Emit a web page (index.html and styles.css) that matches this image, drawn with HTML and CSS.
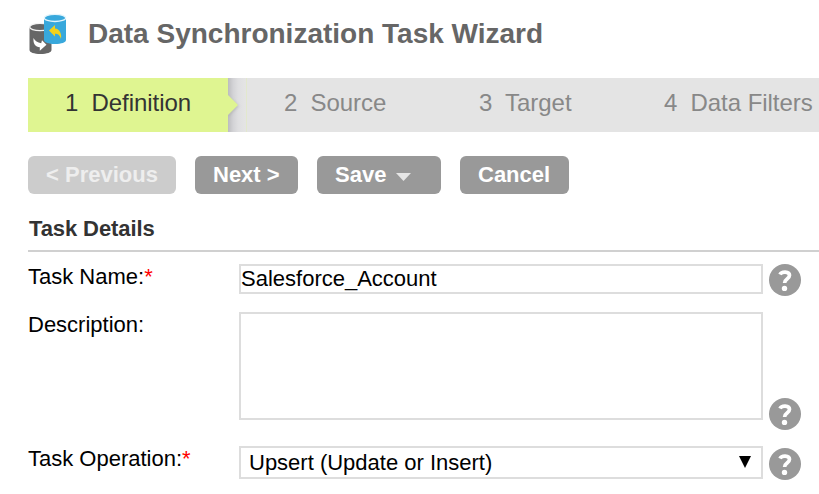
FILE: index.html
```html
<!DOCTYPE html>
<html lang="en">
<head>
<meta charset="utf-8">
<title>Data Synchronization Task Wizard</title>
<link rel="stylesheet" href="styles.css">
</head>
<body>
<header class="header">
  <svg class="logo" width="40" height="42" viewBox="0 0 40 42">
    <path d="M1.500 14v23c0 2.400 4.500 4 11 4s11-1.600 11-4V14z" fill="#666"/>
    <ellipse cx="12" cy="14" rx="10.300" ry="3.600" fill="#666" stroke="#f4f4f4" stroke-width="1.300"/>
    <path d="M5.500 25c-.5 6 2 9 6.300 9.300v3.500l6.700-6-4.500-4.500-.8 3C9.500 29.500 7 28 5.500 25z" fill="#fff"/>
    <path d="M16 5v22c0 2.400 4.500 4 11 4s11-1.600 11-4V5z" fill="#38a8dc"/>
    <ellipse cx="27" cy="4.900" rx="10.700" ry="3.600" fill="#38a8dc" stroke="#e4f5fc" stroke-width="1.300"/>
    <path d="M21 17.500l6-5.500v3.500c4.500.5 7 5 6 10.500-1.200-4-3.200-5.200-6-5.200v2.700z" fill="#f2d21c"/>
  </svg>
  <h1 class="title">Data Synchronization Task Wizard</h1>
</header>
<nav class="steps">
  <div class="step active">1&nbsp; Definition
    <svg class="pointer" width="22" height="54" viewBox="0 0 22 54">
      <defs>
        <linearGradient id="edge"><stop offset="0" stop-color="#bcbcbf"/><stop offset=".3" stop-color="#d3d3d6"/><stop offset=".6" stop-color="#dfdfe1"/><stop offset="1" stop-color="#e4e4e4"/></linearGradient>
        <filter id="soft" x="-50%" y="-50%" width="200%" height="200%"><feGaussianBlur stdDeviation="1.500"/></filter>
      </defs>
      <path d="M0 0h17v54H0z" fill="url(#edge)"/>
      <path d="M0 18l11 10L0 39z" fill="#aaa" opacity=".6" filter="url(#soft)"/>
      <path d="M0 17l10 10L0 37z" fill="#dff591"/>
      <path d="M18.500 0v54" stroke="#e2e8cd"/>
    </svg>
  </div>
  <div class="step source">2&nbsp; Source</div>
  <div class="step target">3&nbsp; Target</div>
  <div class="step filters">4&nbsp; Data Filters</div>
</nav>
<main class="content">
  <div class="actions">
    <button class="btn previous" disabled>&lt; Previous</button>
    <button class="btn next">Next &gt;</button>
    <button class="btn save">Save <svg width="16" height="9" viewBox="0 0 16 9"><path d="M0 0h15L7.500 8z" fill="#e6e6e6"/></svg></button>
    <button class="btn cancel">Cancel</button>
  </div>
  <h2 class="section-title">Task Details</h2>
  <div class="form">
    <div class="row name">
      <label class="label">Task Name:<span class="required">*</span></label>
      <div class="field text">Salesforce_Account</div>
      <svg class="help" width="32" height="32" viewBox="0 0 32 32"><circle cx="16" cy="16" r="16" fill="#999"/><path d="M11 10.500c1.500-3.300 9.500-3.500 9.500.8 0 4-4.900 3.500-4.900 7.700" fill="none" stroke="#fff" stroke-width="3.700"/><circle cx="15.500" cy="24.400" r="2.700" fill="#fff"/></svg>
    </div>
    <div class="row description">
      <label class="label">Description:</label>
      <div class="field area"></div>
      <svg class="help" width="32" height="32" viewBox="0 0 32 32"><circle cx="16" cy="16" r="16" fill="#999"/><path d="M11 10.500c1.500-3.300 9.500-3.500 9.500.8 0 4-4.900 3.500-4.900 7.700" fill="none" stroke="#fff" stroke-width="3.700"/><circle cx="15.500" cy="24.400" r="2.700" fill="#fff"/></svg>
    </div>
    <div class="row operation">
      <label class="label">Task Operation:<span class="required">*</span></label>
      <div class="field select"><span>Upsert (Update or Insert)</span><svg width="12" height="12" viewBox="0 0 12 12"><path d="M0 0h12L6 12z"/></svg></div>
      <svg class="help" width="32" height="32" viewBox="0 0 32 32"><circle cx="16" cy="16" r="16" fill="#999"/><path d="M11 10.500c1.500-3.300 9.500-3.500 9.500.8 0 4-4.900 3.500-4.900 7.700" fill="none" stroke="#fff" stroke-width="3.700"/><circle cx="15.500" cy="24.400" r="2.700" fill="#fff"/></svg>
    </div>
  </div>
</main>
</body>
</html>
```
FILE: styles.css
```css
* { box-sizing: border-box; }
body {
  margin: 0;
  height: 494px;
  overflow: hidden;
  background: #fff;
  color: #000;
  font-family: "Liberation Sans", Arial, sans-serif;
  font-size: 22px;
}
.header { display: flex; height: 78px; padding: 13px 0 0 28px; }
.logo { flex: none; }
.title {
  margin: 5px 0 0 20px;
  color: #666;
  font-size: 28px;
  line-height: 32px;
  white-space: nowrap;
}
.steps {
  display: grid;
  grid-template-columns: 200px 195px 185px 211px;
  height: 54px;
  margin-left: 28px;
  background: #e4e4e4;
  color: #888;
  font-size: 24px;
  line-height: 50px;
  letter-spacing: -0.05px;
  white-space: nowrap;
}
.step { padding-left: 56px; }
.step.active { position: relative; padding-left: 37px; background: #dff591; color: #333; }
.pointer { position: absolute; left: 200px; top: 0; }
.content { padding: 24px 0 0 28px; }
.actions { display: flex; gap: 19px; height: 38px; }
.btn {
  height: 38px;
  padding: 0 0 0 18px;
  border: 0;
  border-radius: 6px;
  background: #999;
  color: #fff;
  font: bold 22px/38px "Liberation Sans", Arial, sans-serif;
  text-align: left;
  white-space: nowrap;
}
.previous { width: 148px; background: #ccc; color: #eee; }
.next { width: 103px; }
.save { width: 124px; }
.save svg { margin-left: 3px; }
.cancel { width: 109px; }
.section-title {
  height: 58px;
  margin: 0;
  padding: 22px 0 0 1px;
  border-bottom: 2px solid #d0d0d0;
  color: #333;
  font-size: 22px;
  line-height: 26px;
  letter-spacing: -0.1px;
}
.row { display: grid; grid-template-columns: 211px 524px 32px; }
.row .help { margin-left: 6px; overflow: visible; }
.name { height: 60px; padding-top: 12px; }
.description { height: 134px; }
.label { line-height: 26px; white-space: nowrap; }
.required { color: #f00; }
.field { border: 2px solid #ddd; white-space: nowrap; }
.text { height: 30px; line-height: 26px; }
.area { height: 108px; }
.description .help { margin-top: 86px; }
.select {
  display: flex;
  justify-content: space-between;
  height: 33px;
  padding: 0 10px 0 8px;
  line-height: 30px;
}
.select svg { margin-top: 8px; }
.operation .help { margin-top: 2px; }
```
